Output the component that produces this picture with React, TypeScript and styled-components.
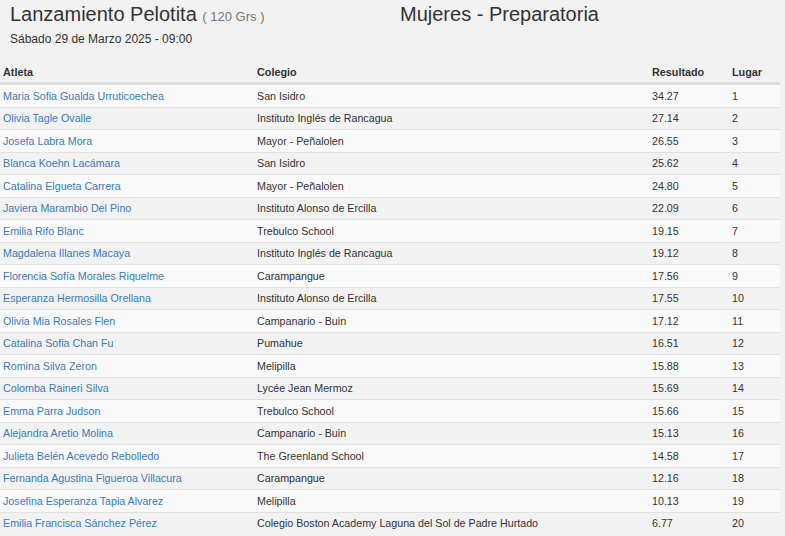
import React from "react";
import styled, { createGlobalStyle } from "styled-components";

const GlobalStyle = createGlobalStyle`
  html, body {
    margin: 0;
    padding: 0;
    background: #f2f2f2;
    font-family: "Liberation Sans", Arial, Helvetica, sans-serif;
    color: #333;
  }
`;

const Page = styled.div`
  width: 785px;
  height: 536px;
  overflow: hidden;
  background: #f2f2f2;
`;

const Header = styled.header`
  display: grid;
  grid-template-columns: 400px 1fr;
  padding: 3px 0 0 0;
  height: 62px;
  box-sizing: border-box;
`;

const LeftHead = styled.div`
  padding-left: 10px;
  display: flex;
  flex-direction: column;
`;

const Title = styled.h1`
  margin: 0;
  font-size: 20px;
  font-weight: 400;
  line-height: 22px;
  color: #333;
`;

const Small = styled.small`
  font-size: 13px;
  color: #777;
`;

const DateLine = styled.div`
  margin-top: 3px;
  font-size: 12px;
  line-height: 17px;
`;

const Grid = styled.div`
  width: 780px;
  display: grid;
  grid-template-columns: 254px 395px 80px 51px;
`;

const HeadCell = styled.div`
  height: 22px;
  box-sizing: border-box;
  border-bottom: 2px solid #dddddd;
  padding-left: 3px;
  display: flex;
  align-items: center;
  font-size: 10.8px;
  font-weight: 700;
  color: #333;
`;

const Cell = styled.div<{ $odd: boolean }>`
  height: 22.5px;
  box-sizing: border-box;
  border-top: 1px solid #e1e1e1;
  padding-left: 3px;
  display: flex;
  align-items: center;
  font-size: 10.7px;
  background: ${(p) => (p.$odd ? "#f9f9f9" : "#f2f2f2")};
  color: #333;
  white-space: nowrap;
  overflow: hidden;
`;

const AthleteLink = styled.a`
  color: #3a7bb8;
  text-decoration: none;
`;

const rows: [string, string, string][] = [
  ["Maria Sofia Gualda Urruticoechea", "San Isidro", "34.27"],
  ["Olivia Tagle Ovalle", "Instituto Inglés de Rancagua", "27.14"],
  ["Josefa Labra Mora", "Mayor - Peñalolen", "26.55"],
  ["Blanca Koehn Lacámara", "San Isidro", "25.62"],
  ["Catalina Elgueta Carrera", "Mayor - Peñalolen", "24.80"],
  ["Javiera Marambio Del Pino", "Instituto Alonso de Ercilla", "22.09"],
  ["Emilia Rifo Blanc", "Trebulco School", "19.15"],
  ["Magdalena Illanes Macaya", "Instituto Inglés de Rancagua", "19.12"],
  ["Florencia Sofía Morales Riquelme", "Carampangue", "17.56"],
  ["Esperanza Hermosilla Orellana", "Instituto Alonso de Ercilla", "17.55"],
  ["Olivia Mia Rosales Flen", "Campanario - Buin", "17.12"],
  ["Catalina Sofia Chan Fu", "Pumahue", "16.51"],
  ["Romina Silva Zeron", "Melipilla", "15.88"],
  ["Colomba Raineri Silva", "Lycée Jean Mermoz", "15.69"],
  ["Emma Parra Judson", "Trebulco School", "15.66"],
  ["Alejandra Aretio Molina", "Campanario - Buin", "15.13"],
  ["Julieta Belén Acevedo Rebolledo", "The Greenland School", "14.58"],
  ["Fernanda Agustina Figueroa Villacura", "Carampangue", "12.16"],
  ["Josefina Esperanza Tapia Alvarez", "Melipilla", "10.13"],
  ["Emilia Francisca Sánchez Pérez", "Colegio Boston Academy Laguna del Sol de Padre Hurtado", "6.77"],
];

export default function App() {
  return (
    <Page>
      <GlobalStyle />
      <Header>
        <LeftHead>
          <Title>
            Lanzamiento Pelotita <Small>( 120 Grs )</Small>
          </Title>
          <DateLine>Sábado 29 de Marzo 2025 - 09:00</DateLine>
        </LeftHead>
        <Title>Mujeres - Preparatoria</Title>
      </Header>
      <Grid>
        <HeadCell>Atleta</HeadCell>
        <HeadCell>Colegio</HeadCell>
        <HeadCell>Resultado</HeadCell>
        <HeadCell>Lugar</HeadCell>
        {rows.map(([name, school, result], i) => {
          const odd = i % 2 === 0;
          return (
            <React.Fragment key={name}>
              <Cell $odd={odd}>
                <AthleteLink href="#">{name}</AthleteLink>
              </Cell>
              <Cell $odd={odd}>{school}</Cell>
              <Cell $odd={odd}>{result}</Cell>
              <Cell $odd={odd}>{i + 1}</Cell>
            </React.Fragment>
          );
        })}
      </Grid>
    </Page>
  );
}
